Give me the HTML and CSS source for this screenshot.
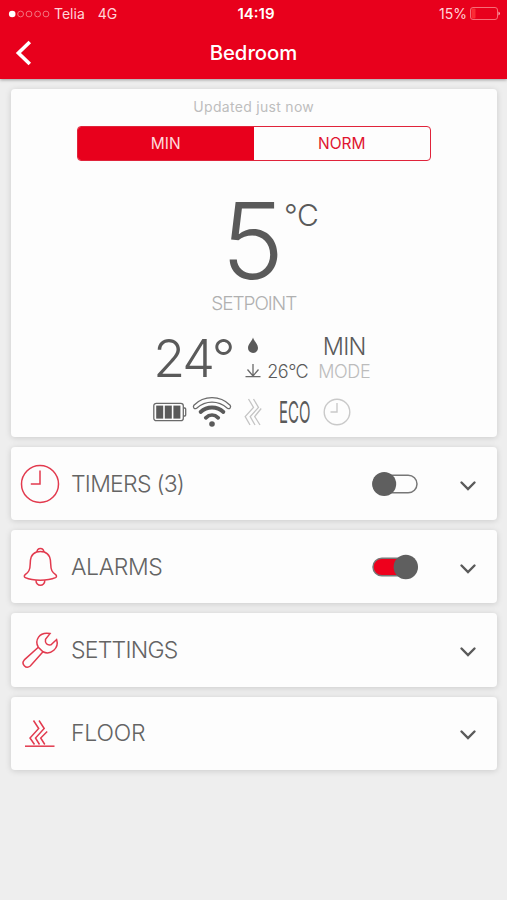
FILE: index.html
```html
<!DOCTYPE html>
<html lang="en">
<head>
  <meta charset="UTF-8" />
  <meta name="viewport" content="width=device-width, initial-scale=1" />
  <title>Bedroom</title>
  <link rel="stylesheet" href="styles.css">
</head>
<body>
  <header class="header">
    <div class="status-bar">
      <div class="carrier">
        <svg class="signal" width="42" height="8" viewBox="0 0 42 8">
          <circle class="dot-on" cx="4.2" cy="4" r="3.3" />
          <circle cx="12.6" cy="4" r="2.9" />
          <circle cx="21" cy="4" r="2.9" />
          <circle cx="29.6" cy="4" r="2.9" />
          <circle cx="38" cy="4" r="2.9" />
        </svg>
        <span class="operator">Telia</span>
        <span class="network">4G</span>
      </div>
      <span class="clock">14:19</span>
      <div class="power">
        <span class="percent">15%</span>
        <svg class="power-icon" width="31" height="13" viewBox="0 0 31 13">
          <rect class="power-level" x="1.5" y="1.5" width="4" height="10" rx="1" />
          <rect class="power-frame" x="0.5" y="0.5" width="27" height="12" rx="2.5" />
          <path class="power-tip" d="M28.6 4.5 q2.2 2 0 4 z" />
        </svg>
      </div>
    </div>
    <div class="nav-bar">
      <button class="back" aria-label="Back">
        <svg width="18" height="26" viewBox="0 0 18 26"><path d="M15.8 2 L4.4 13 L15.8 24" /></svg>
      </button>
      <h1 class="title">Bedroom</h1>
    </div>
  </header>

  <main class="content">
    <section class="card overview">
      <div class="updated">Updated just now</div>
      <div class="segments">
        <button class="segment active">MIN</button>
        <button class="segment">NORM</button>
      </div>

      <div class="setpoint">
        <span class="setpoint-value">5</span>
        <span class="setpoint-unit">°C</span>
      </div>
      <div class="setpoint-label">SETPOINT</div>

      <div class="readings">
        <div class="room-temp">24°</div>
        <div class="floor">
          <svg class="drop" width="12" height="17" viewBox="0 0 12 17">
            <path d="M6 0.5 C7.2 4.5 11 7.2 11 11 A5 5 0 0 1 1 11 C1 7.2 4.8 4.5 6 0.5 Z" />
          </svg>
          <div class="floor-temp">
            <svg class="floor-arrow" width="16" height="14" viewBox="0 0 16 14">
              <path d="M8 0 V12 M2.5 5.5 L8 12 L13.5 5.5 M0.5 12.7 H15.5" />
            </svg>
            <span class="floor-value">26°C</span>
          </div>
        </div>
        <div class="mode">
          <div class="mode-value">MIN</div>
          <div class="mode-label">MODE</div>
        </div>
      </div>

      <div class="indicators">
        <svg class="ind-battery" width="34" height="20" viewBox="0 0 34 20">
          <rect class="line" x="0.8" y="1.3" width="29.5" height="17.4" rx="2.5" />
          <path class="line" d="M30.5 6 h1.2 q1 0 1 1 v6 q0 1 -1 1 h-1.2" />
          <rect class="cell" x="3.2" y="3.6" width="7" height="13" />
          <rect class="cell" x="11.8" y="3.6" width="7" height="13" />
          <rect class="cell" x="20.4" y="3.6" width="7" height="13" />
        </svg>
        <svg class="ind-wifi" width="40" height="30" viewBox="0 0 40 30">
          <path class="line" d="M1.9 8.2 C12 -1.8 28 -1.8 38.1 8.2 C39.5 10.5 37.5 12.6 35.4 11.2 C26 3.2 14 3.2 4.6 11.2 C2.5 12.6 0.5 10.5 1.9 8.2 Z" />
          <path class="arc" d="M8.6 15 C15 9 25 9 31.4 15" />
          <path class="arc" d="M13.8 20.8 C17.5 17.2 22.5 17.2 26.2 20.8" />
          <circle class="cell" cx="20" cy="27" r="2.8" />
        </svg>
        <svg class="ind-heat" width="18" height="28" viewBox="0 0 18 28">
          <path d="M4.5 1 L9.5 9.5 L1.2 18.5 L6 27 M9.5 1 L14.5 9.5 L6.2 18.5 L11 27 M17.2 10.5 L10.7 18.5 L16 27" />
        </svg>
        <span class="eco"><span class="eco-text">ECO</span></span>
        <svg class="ind-clock" width="28" height="28" viewBox="0 0 28 28">
          <circle cx="14" cy="14" r="12.8" />
          <path d="M14 5 V14 H7.5" />
        </svg>
      </div>
    </section>

    <section class="card row">
      <svg class="row-icon" width="40" height="40" viewBox="0 0 40 40">
        <circle cx="20" cy="20" r="18.5" />
        <path d="M20 6.5 V20 H10.8" />
      </svg>
      <h2 class="row-title">TIMERS (3)</h2>
      <svg class="toggle" width="48" height="26" viewBox="0 0 48 26">
        <rect class="track" x="2" y="4.2" width="44" height="17.6" rx="8.8" />
        <circle class="knob" cx="13.2" cy="13" r="12" />
      </svg>
      <svg class="chevron" width="18" height="12" viewBox="0 0 18 12"><path d="M2.5 2.5 L9 9 L15.5 2.5" /></svg>
    </section>

    <section class="card row">
      <svg class="row-icon" width="40" height="40" viewBox="0 0 40 40">
        <path d="M17 4.8 C10.5 7 10.3 12.5 10.2 17 C10.1 23.5 8.5 25 5.2 27.6 C4 28.6 4 30 5.3 30.6 C13 34 27.5 34 35.5 30.6 C36.8 30 36.8 28.6 35.6 27.6 C32.2 25 30.8 23.5 30.7 17 C30.6 12.5 30.2 7 23.8 4.8" />
        <path d="M17 5.3 C17 0.3 23.8 0.3 23.8 5.3 M17 5 Q20.4 3.8 23.8 5" />
        <path d="M16 33.2 C15.8 40 25 40 24.8 33.2" />
      </svg>
      <h2 class="row-title title-alarms">ALARMS</h2>
      <svg class="toggle" width="48" height="26" viewBox="0 0 48 26">
        <rect class="track track-on" x="2" y="4.2" width="44" height="17.6" rx="8.8" />
        <circle class="knob" cx="34.8" cy="13" r="12.2" />
      </svg>
      <svg class="chevron" width="18" height="12" viewBox="0 0 18 12"><path d="M2.5 2.5 L9 9 L15.5 2.5" /></svg>
    </section>

    <section class="card row">
      <svg class="row-icon" width="40" height="40" viewBox="0 0 40 40">
        <path d="M18.3 17.2 C14.4 10.5 19 1.5 30 3.6 L25.5 9.3 C24.8 13.2 27 15.5 31 14.8 L36.6 9.5 C39.3 18 31 25.6 23 21.8 Z" />
        <path d="M18.3 17.2 L4.3 29.9 C0.8 33.5 5.8 39.6 10.3 36 L23 21.8" />
      </svg>
      <h2 class="row-title">SETTINGS</h2>
      <svg class="chevron" width="18" height="12" viewBox="0 0 18 12"><path d="M2.5 2.5 L9 9 L15.5 2.5" /></svg>
    </section>

    <section class="card row">
      <svg class="row-icon" width="40" height="40" viewBox="0 0 40 40">
        <path d="M5 33.2 H34.5" />
        <path d="M13.5 7.5 L18.7 15.5 L10 25 L14.5 31.5 M19 7.5 L24.2 15.5 L15.5 25 L19.5 31.5 M27.2 18.5 L20.7 25 L24.8 31.5" />
      </svg>
      <h2 class="row-title title-floor">FLOOR</h2>
      <svg class="chevron" width="18" height="12" viewBox="0 0 18 12"><path d="M2.5 2.5 L9 9 L15.5 2.5" /></svg>
    </section>
  </main>
</body>
</html>
```
FILE: styles.css
```css
/* Global Styles */
* {
  box-sizing: border-box;
}
body {
  margin: 0;
  min-height: 100vh;
  background: #eeeeee;
  font-family: Inter, "Liberation Sans", sans-serif;
  color: #5a5a5a;
}
svg {
  display: block;
  flex: none;
  fill: none;
}
button {
  font: inherit;
  padding: 0;
  border: none;
  background: none;
}

/* Header */
.header {
  height: 79px;
  background: #e8001c;
  color: #fff;
  box-shadow: 0 1px 3px rgba(0, 0, 0, 0.35);
}
.status-bar {
  display: grid;
  grid-template-columns: 1fr auto 1fr;
  align-items: center;
  height: 27px;
  padding: 0 6px 0 8px;
  font-size: 14px;
  line-height: 27px;
}
.carrier,
.power {
  display: flex;
  align-items: center;
  color: #ffd5d9;
}
.power {
  justify-content: flex-end;
}
.signal {
  stroke: #f3747f;
  stroke-width: 1;
}
.dot-on {
  fill: #fff;
  stroke: none;
}
.operator {
  margin-left: 4px;
}
.network {
  margin-left: 13px;
}
.clock {
  font-weight: 600;
  font-size: 15px;
  padding-left: 3px;
}
.power-icon {
  margin-left: 3px;
}
.power-frame {
  stroke: #f66e78;
}
.power-level {
  fill: #fa2b35;
}
.power-tip {
  fill: #fff;
}
.nav-bar {
  display: grid;
  grid-template-columns: 60px 1fr 60px;
  align-items: center;
  height: 51px;
}
.back {
  padding-left: 14px;
}
.back svg {
  stroke: #fff;
  stroke-width: 3.6;
}
.title {
  margin: 0;
  text-align: center;
  font-size: 20.3px;
  line-height: 26px;
  font-weight: 500;
}

/* Cards */
.content {
  display: flex;
  flex-direction: column;
  gap: 10px;
  padding: 10px 10px 0 10.5px;
}
.card {
  background: #fdfdfd;
  border-radius: 4px;
  box-shadow: 0 1px 6px rgba(0, 0, 0, 0.15);
}
.overview {
  display: flex;
  flex-direction: column;
  align-items: center;
  height: 348px;
  padding-top: 9px;
}
.updated {
  font-size: 14px;
  line-height: 18px;
  letter-spacing: 0.3px;
  color: #bdbdbd;
}
.segments {
  display: flex;
  width: 354px;
  height: 35px;
  margin-top: 10px;
  border: 1px solid #e0243b;
  border-radius: 4px;
  overflow: hidden;
}
.segment {
  flex: 1;
  font-size: 15.5px;
  color: #e0142f;
}
.segment.active {
  background: #e8001c;
  color: #ffdadd;
}

/* Setpoint */
.setpoint {
  display: flex;
  height: 86px;
  margin-top: 37px;
  padding-left: 32px;
}
.setpoint-value {
  font-size: 106px;
  line-height: 86px;
  font-weight: 300;
}
.setpoint-unit {
  font-size: 30px;
  line-height: 35px;
  font-weight: 300;
  letter-spacing: -0.5px;
}
.setpoint-label {
  margin-top: 9px;
  font-size: 19px;
  line-height: 22px;
  font-weight: 300;
  letter-spacing: -1px;
  color: #b0b0b0;
}

/* Measured temperatures and mode */
.readings {
  display: flex;
  width: 220px;
  height: 50px;
  margin-top: 20px;
  margin-left: 19px;
}
.room-temp {
  width: 92px;
  font-size: 52px;
  line-height: 47px;
  font-weight: 300;
  letter-spacing: -2px;
  white-space: nowrap;
}
.floor {
  width: 71px;
}
.drop {
  margin: 2px 0 0 2px;
  fill: #5a5a5a;
}
.floor-temp {
  display: flex;
  align-items: center;
  gap: 6px;
  margin-top: 7px;
  height: 20px;
}
.floor-arrow {
  stroke: #6a6a6a;
  stroke-width: 1.3;
}
.floor-value {
  font-size: 18px;
  font-weight: 300;
  letter-spacing: -0.5px;
}
.mode {
  width: 56px;
  text-align: center;
  white-space: nowrap;
}
.mode-value {
  font-size: 23.5px;
  line-height: 24px;
  font-weight: 300;
  letter-spacing: -0.8px;
}
.mode-label {
  font-size: 18px;
  line-height: 26px;
  font-weight: 300;
  letter-spacing: -0.4px;
  color: #bcbcbc;
}

/* Indicator icons */
.indicators {
  display: flex;
  align-items: center;
  width: 202px;
  height: 30px;
  margin-top: 12px;
}
.indicators .line {
  stroke: #6a6a6a;
  stroke-width: 1.3;
}
.indicators .cell {
  fill: #5a5a5a;
}
.indicators .arc {
  stroke: #5a5a5a;
  stroke-width: 3.8;
  stroke-linecap: round;
}
.ind-wifi {
  margin-left: 5px;
}
.ind-heat {
  margin-left: 12px;
  stroke: #c4c4c4;
  stroke-width: 1.3;
}
.eco {
  width: 32px;
  margin-left: 17px;
  font-size: 30px;
  line-height: 30px;
  font-weight: 400;
}
.eco-text {
  display: inline-block;
  transform: scaleX(0.5);
  transform-origin: left;
}
.ind-clock {
  margin-left: 12px;
  stroke: #c9c9c9;
  stroke-width: 1.4;
}

/* Menu rows */
.row {
  display: flex;
  align-items: center;
  height: 73.2px;
  padding: 0 20px 0 9.5px;
}
.row-icon {
  stroke: #e23a4e;
  stroke-width: 1.5;
}
.row-title {
  flex: 1;
  margin: 0 0 0 11px;
  font-size: 23px;
  line-height: 30px;
  font-weight: 300;
  letter-spacing: -0.75px;
  color: #646464;
  white-space: nowrap;
}
.title-alarms {
  letter-spacing: -0.4px;
}
.title-floor {
  letter-spacing: -0.2px;
}
.toggle {
  margin-right: 40px;
}
.track {
  stroke: #777;
  stroke-width: 1.5;
}
.track-on {
  fill: #ee001c;
}
.knob {
  fill: #5f5f5f;
}
.chevron {
  margin-top: 4px;
  stroke: #5a5a5a;
  stroke-width: 2.4;
  stroke-linecap: round;
}
```
